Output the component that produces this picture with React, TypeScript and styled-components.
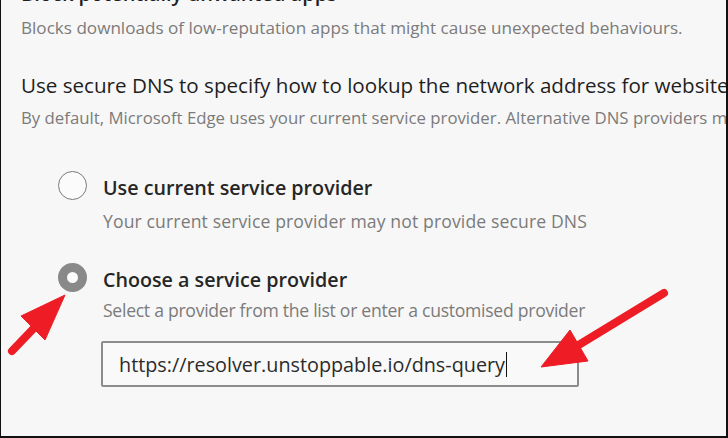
import React from "react";
import styled, { createGlobalStyle } from "styled-components";

const Global = createGlobalStyle`
  body {
    margin: 0;
    background: #ffffff;
    font-family: "Open Sans", "Noto Sans", sans-serif;
  }
`;

const Frame = styled.div`
  position: relative;
  width: 728px;
  height: 438px;
  box-sizing: border-box;
  overflow: hidden;
  background: #f7f7f7;
  border-left: 1px solid #111;
  border-right: 2px solid #111;
  border-bottom: 2px solid #111;
`;

const Content = styled.div`
  padding-left: 20px;
  display: flex;
  flex-direction: column;
  align-items: flex-start;
`;

const CutTitle = styled.div`
  margin-top: -18px;
  font-size: 20px;
  line-height: 24px;
  font-weight: 600;
  color: #1f1f1f;
  white-space: nowrap;
`;

const SectionTitle = styled.div<{ $gap: number }>`
  margin-top: ${(p) => p.$gap}px;
  font-size: 20.6px;
  line-height: 24px;
  color: #1f1f1f;
  white-space: nowrap;
`;

const Hint = styled.div<{ $gap: number; $indent?: number; $size?: number; $track?: number }>`
  margin-top: ${(p) => p.$gap}px;
  margin-left: ${(p) => p.$indent || 0}px;
  font-size: ${(p) => p.$size || 17.6}px;
  letter-spacing: ${(p) => p.$track || 0}px;
  line-height: 24px;
  color: #7b7b7b;
  white-space: nowrap;
`;

const Option = styled.label<{ $gap: number }>`
  margin-top: ${(p) => p.$gap}px;
  margin-left: 37px;
  height: 30px;
  display: flex;
  align-items: center;
  gap: 16px;
  cursor: pointer;
`;

const Radio = styled.span<{ $checked?: boolean }>`
  width: 29px;
  height: 29px;
  box-sizing: border-box;
  border-radius: 50%;
  background: #fbfbfb;
  border: ${(p) => (p.$checked ? "9px solid #898989" : "1px solid #7a7a7a")};
  flex-shrink: 0;
`;

const OptionLabel = styled.span`
  margin-top: 5px;
  font-size: 19.7px;
  line-height: 24px;
  font-weight: 600;
  color: #262626;
  white-space: nowrap;
`;

const UrlBox = styled.div`
  margin-top: 19px;
  margin-left: 80px;
  width: 478px;
  height: 46px;
  box-sizing: border-box;
  border: 2px solid #8c8c8c;
  border-radius: 2px;
  background: #f9f9f9;
  padding-left: 16px;
  display: flex;
  align-items: center;
  font-size: 19.8px;
  color: #2b2b2b;
  white-space: nowrap;
`;

const Caret = styled.span`
  display: inline-block;
  width: 1px;
  height: 25px;
  background: #111;
  margin-left: 1px;
`;

const Overlay = styled.svg`
  position: absolute;
  left: 0;
  top: 0;
  pointer-events: none;
`;

function Arrow({ from, to, head }: { from: [number, number]; to: [number, number]; head: [number, number][] }) {
  return (
    <g fill="#ee1c25" stroke="#ee1c25">
      <line x1={from[0]} y1={from[1]} x2={to[0]} y2={to[1]} strokeWidth={8} strokeLinecap="round" />
      <polygon points={head.map((p) => p.join(",")).join(" ")} strokeWidth={1} strokeLinejoin="round" />
    </g>
  );
}

export default function App() {
  return (
    <>
      <Global />
      <Frame>
        <Content>
          <CutTitle>Block potentially unwanted apps</CutTitle>
          <Hint $gap={10} $size={17.1}>
            Blocks downloads of low-reputation apps that might cause unexpected behaviours.
          </Hint>
          <SectionTitle $gap={33}>Use secure DNS to specify how to lookup the network address for websites</SectionTitle>
          <Hint $gap={9} $size={16.8}>
            By default, Microsoft Edge uses your current service provider. Alternative DNS providers may cause some sites to not be reachable.
          </Hint>

          <Option $gap={40}>
            <Radio />
            <OptionLabel>Use current service provider</OptionLabel>
          </Option>
          <Hint $gap={9} $indent={82} $track={0.12}>
            Your current service provider may not provide secure DNS
          </Hint>

          <Option $gap={29}>
            <Radio $checked />
            <OptionLabel>Choose a service provider</OptionLabel>
          </Option>
          <Hint $gap={6} $indent={82} $track={-0.28}>
            Select a provider from the list or enter a customised provider
          </Hint>

          <UrlBox>
            https://resolver.unstoppable.io/dns-query
            <Caret />
          </UrlBox>
        </Content>

        <Overlay width={728} height={438} viewBox="0 0 728 438">
          <Arrow from={[11, 351]} to={[34, 327]} head={[[64, 295], [20, 316], [44, 340]]} />
          <Arrow from={[663, 293]} to={[576, 346]} head={[[540, 367], [569, 330], [587, 361]]} />
        </Overlay>
      </Frame>
    </>
  );
}
